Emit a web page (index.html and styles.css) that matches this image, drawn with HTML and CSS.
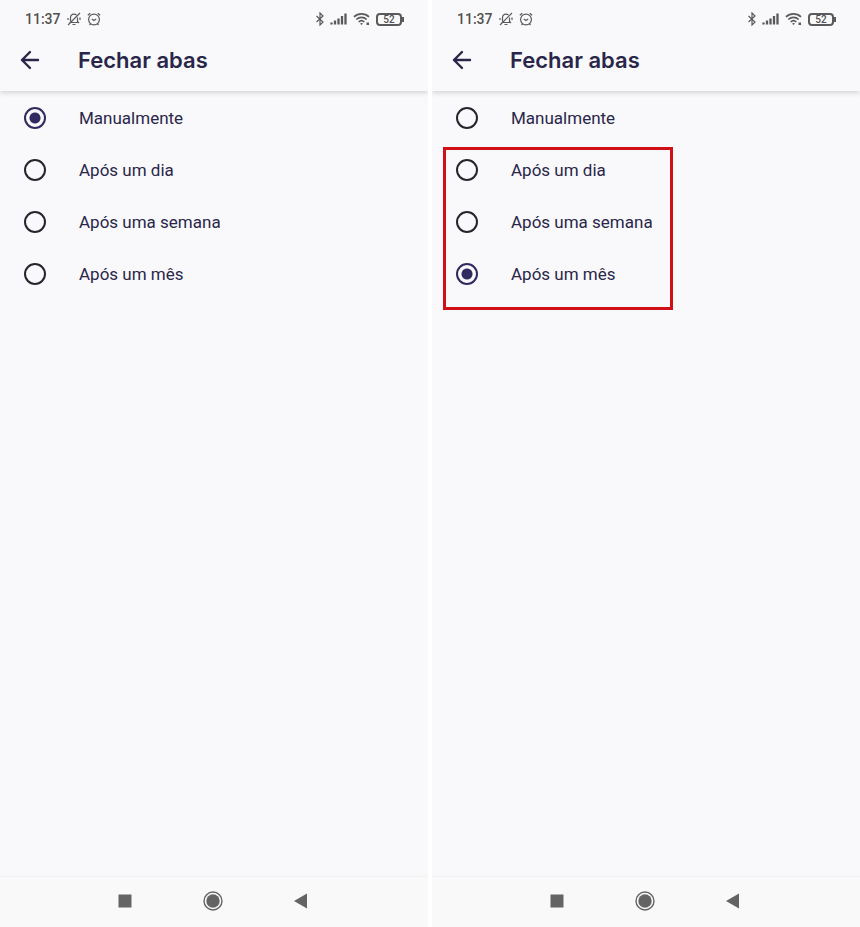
FILE: index.html
```html
<!DOCTYPE html>
<html lang="pt-BR">

<head>
    <meta charset="utf-8">
    <meta name="viewport" content="width=device-width, initial-scale=1">
    <title>Fechar abas</title>
    <link rel="stylesheet" href="styles.css">
</head>

<body>
    <!-- Shared icons -->
    <svg class="sprite" aria-hidden="true">
        <symbol id="muted" viewBox="0 0 14 14">
            <path d="M2.500 10.500h9.500M3.500 9.500V6c0-2.400 1.500-3.900 3.500-3.900 1 0 1.800.3 2.500 1M10.500 5.500v4l1.500 1.500M5.500 12.500h3M13 1L1 13M1 8V6M13 8V5.500" />
        </symbol>
        <symbol id="alarm" viewBox="0 0 14 14">
            <circle cx="7" cy="7.500" r="5.400" />
            <path d="M.8 3.200l2.500-2M13.200 3.200l-2.500-2M4.800 7l2.200 1.500 2.200-1.500M3.500 12l-1 1M10.500 12l1 1" />
        </symbol>
        <symbol id="bluetooth" viewBox="0 0 10 14">
            <path d="M1.500 4l6.500 6-3 3V1l3 3-6.500 6" />
        </symbol>
        <symbol id="signal" viewBox="0 0 17 14">
            <path d="M1.500 12.500v-2M5 12.500v-4M8.500 12.500v-6M12 12.500v-8.500M15.500 12.500v-11" />
        </symbol>
        <symbol id="wifi" viewBox="0 0 17 14">
            <path d="M1 4.800c4.200-4 10.800-4 15 0M3.300 7.500c3-2.800 7.400-2.800 10.400 0M5.700 10c1.600-1.500 4-1.500 5.600 0" />
            <path class="solid" d="M7 11.500q1.500-1 3 0l-1.500 1.500zM13.500 10.500h2.500V13h-2.500z" />
        </symbol>
        <symbol id="back" viewBox="0 0 20 20">
            <path d="M18 10H2M10 2l-8 8 8 8" />
        </symbol>
        <symbol id="square" viewBox="0 0 20 20">
            <path d="M3.500 3.500h13v13h-13z" />
        </symbol>
        <symbol id="home" viewBox="0 0 20 20">
            <circle cx="10" cy="10" r="6.700" />
            <circle class="ring" cx="10" cy="10" r="9" />
        </symbol>
        <symbol id="triangle" viewBox="0 0 20 20">
            <path d="M3 10l13-7.500v15z" />
        </symbol>
    </svg>

    <main class="screens">
        <section class="phone">
            <header class="header">
                <div class="status">
                    <span class="time">11:37</span>
                    <svg class="icon small"><use href="#muted" /></svg>
                    <svg class="icon small alarm"><use href="#alarm" /></svg>
                    <svg class="icon bluetooth"><use href="#bluetooth" /></svg>
                    <svg class="icon signal"><use href="#signal" /></svg>
                    <svg class="icon wifi"><use href="#wifi" /></svg>
                    <span class="battery">52</span>
                </div>
                <div class="toolbar">
                    <button class="back" type="button" aria-label="Voltar"><svg><use href="#back" /></svg></button>
                    <h1>Fechar abas</h1>
                </div>
            </header>
            <form class="options">
                <label class="option"><input type="radio" name="close-left" checked>Manualmente</label>
                <label class="option"><input type="radio" name="close-left">Após um dia</label>
                <label class="option"><input type="radio" name="close-left">Após uma semana</label>
                <label class="option"><input type="radio" name="close-left">Após um mês</label>
            </form>
            <nav class="navbar">
                <button type="button" aria-label="Recentes"><svg><use href="#square" /></svg></button>
                <button type="button" aria-label="Início"><svg><use href="#home" /></svg></button>
                <button type="button" aria-label="Voltar"><svg><use href="#triangle" /></svg></button>
            </nav>
        </section>

        <section class="phone">
            <header class="header">
                <div class="status">
                    <span class="time">11:37</span>
                    <svg class="icon small"><use href="#muted" /></svg>
                    <svg class="icon small alarm"><use href="#alarm" /></svg>
                    <svg class="icon bluetooth"><use href="#bluetooth" /></svg>
                    <svg class="icon signal"><use href="#signal" /></svg>
                    <svg class="icon wifi"><use href="#wifi" /></svg>
                    <span class="battery">52</span>
                </div>
                <div class="toolbar">
                    <button class="back" type="button" aria-label="Voltar"><svg><use href="#back" /></svg></button>
                    <h1>Fechar abas</h1>
                </div>
            </header>
            <form class="options">
                <label class="option"><input type="radio" name="close-right">Manualmente</label>
                <div class="highlight">
                    <label class="option"><input type="radio" name="close-right">Após um dia</label>
                    <label class="option"><input type="radio" name="close-right">Após uma semana</label>
                    <label class="option"><input type="radio" name="close-right" checked>Após um mês</label>
                </div>
            </form>
            <nav class="navbar">
                <button type="button" aria-label="Recentes"><svg><use href="#square" /></svg></button>
                <button type="button" aria-label="Início"><svg><use href="#home" /></svg></button>
                <button type="button" aria-label="Voltar"><svg><use href="#triangle" /></svg></button>
            </nav>
        </section>
    </main>
</body>

</html>
```

FILE: styles.css
```css
*,
*::after {
    box-sizing: border-box;
}

body {
    margin: 0;
    background: #ffffff;
    color: #29264a;
    font-family: Roboto, sans-serif;
}

button {
    padding: 0;
    border: 0;
    background: none;
    cursor: pointer;
}

svg {
    display: block;
}

.sprite {
    display: none;
}

.screens {
    display: grid;
    grid-template-columns: 1fr 1fr;
    gap: 4px;
    min-height: 100vh;
}

.phone {
    display: flex;
    flex-direction: column;
    background: #f9f9fb;
}

.header {
    background: #f9f9fb;
    box-shadow: 0 2px 5px rgba(0, 0, 0, 0.15);
    clip-path: inset(0 0 -8px 0);
}

/* Status bar */
.status {
    display: flex;
    align-items: center;
    height: 38px;
    padding: 0 26px 0 25px;
    color: #505050;
}

.time {
    margin-right: 6px;
    font-size: 14px;
    font-weight: 500;
}

.icon {
    height: 14px;
    fill: none;
    stroke: #5a5a5a;
    stroke-width: 1.2;
}

.small {
    width: 14px;
}

.alarm {
    margin-left: 6px;
}

.bluetooth {
    width: 10px;
    margin-left: auto;
}

.signal {
    width: 17px;
    margin-left: 5px;
    stroke-width: 2.3;
}

.wifi {
    width: 17px;
    margin-left: 6px;
    stroke-width: 1.7;
}

.solid {
    fill: #5a5a5a;
    stroke: none;
}

.battery {
    position: relative;
    width: 26px;
    height: 13px;
    margin-left: 6px;
    border: 2px solid #5a5a5a;
    border-radius: 4px;
    font-size: 10px;
    font-weight: 500;
    line-height: 9px;
    text-align: center;
}

.battery::after {
    content: "";
    position: absolute;
    top: 2px;
    right: -4px;
    width: 2px;
    height: 5px;
    background: #5a5a5a;
}

/* Title */
.toolbar {
    display: flex;
    align-items: center;
    height: 53px;
    padding: 0 20px 9px;
}

.back svg {
    width: 20px;
    height: 20px;
    fill: none;
    stroke: #29264a;
    stroke-width: 2.4;
    stroke-linecap: round;
    stroke-linejoin: round;
}

h1 {
    margin: 0 0 0 38px;
    font-family: Inter, sans-serif;
    font-size: 22px;
    font-weight: 600;
    line-height: 28px;
}

/* Radio list */
.options {
    flex: 1;
    padding-top: 1px;
}

.option {
    display: flex;
    align-items: center;
    gap: 33px;
    height: 52px;
    padding-left: 24px;
    font-size: 17px;
    cursor: pointer;
}

.option input {
    appearance: none;
    width: 22px;
    height: 22px;
    margin: 0;
    border: 2px solid #26252e;
    border-radius: 50%;
}

.option input:checked {
    border-color: #312a60;
    background: radial-gradient(circle, #312a60 5px, transparent 6px);
}

.highlight {
    position: relative;
}

.highlight::after {
    content: "";
    position: absolute;
    top: 3px;
    bottom: -10px;
    left: 11px;
    width: 230px;
    border: 3px solid #d01016;
    pointer-events: none;
}

/* Bottom navigation */
.navbar {
    display: flex;
    justify-content: center;
    gap: 68px;
    height: 51px;
    padding: 0 2px 2px 0;
    border-top: 1px solid #f2f2f3;
    background: #f9f9f9;
}

.navbar svg {
    width: 20px;
    height: 20px;
    fill: #646464;
}

.ring {
    fill: none;
    stroke: #646464;
    stroke-width: 1.4;
}
```
